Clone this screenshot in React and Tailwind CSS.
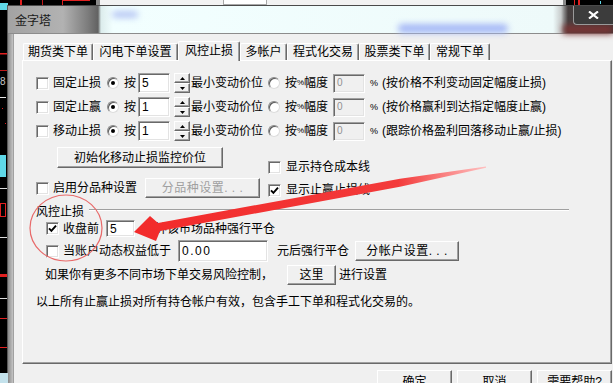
import React from "react";

// classic win32 3d borders
const raised =
	"border border-t-white border-l-white border-r-[#696969] border-b-[#696969] shadow-[inset_-1px_-1px_0_#a0a0a0]";
const sunken =
	"border border-t-[#a0a0a0] border-l-[#a0a0a0] border-r-white border-b-white shadow-[inset_1px_1px_0_#696969,inset_-1px_-1px_0_#e3e3e3]";

const TABS = [
	{ name: "期货类下单", w: "w-[70px]" },
	{ name: "闪电下单设置", w: "w-[85px]" },
	{ name: "风控止损", w: "w-[62px]", active: true },
	{ name: "多帐户", w: "w-[47px]" },
	{ name: "程式化交易", w: "w-[72px]" },
	{ name: "股票类下单", w: "w-[71px]" },
	{ name: "常规下单", w: "w-[60px]" }
];

const STOP_ROWS = [
	{ label: "固定止损", val: "5", note: "(按价格不利变动固定幅度止损)" },
	{ label: "固定止赢", val: "1", note: "(按价格赢利到达指定幅度止赢)" },
	{ label: "移动止损", val: "1", note: "(跟踪价格盈利回落移动止赢/止损)" }
];

function Check({ checked }) {
	return (
		<span className={`w-[13px] h-[13px] shrink-0 bg-white flex items-center justify-center ${sunken}`}>
			{checked && (
				<svg width="9" height="9" viewBox="0 0 9 9">
					<path d="M1 4.3 L3.4 6.8 L8 1.6" stroke="#000" strokeWidth="1.9" fill="none" />
				</svg>
			)}
		</span>
	);
}

function Radio({ on }) {
	return (
		<span className="w-[12px] h-[12px] shrink-0 rounded-full bg-white border border-t-[#8a8a8a] border-l-[#8a8a8a] border-r-[#dcdcdc] border-b-[#dcdcdc] shadow-[inset_1px_1px_0_#5a5a5a] flex items-center justify-center">
			{on && <span className="w-[4px] h-[4px] rounded-full bg-black" />}
		</span>
	);
}

function Field({ className, children, disabled }) {
	return (
		<span
			className={`shrink-0 flex items-center pl-[3px] ${disabled ? "bg-[#f0f0f0] text-[#909090] text-[10px]" : "bg-white"} ${sunken} ${className}`}>
			{children}
		</span>
	);
}

function Btn({ className, children, disabled }) {
	return (
		<span
			className={`shrink-0 flex items-center justify-center bg-[#f0f0f0] ${disabled ? "text-[#a0a0a0]" : ""} ${raised} ${className}`}>
			{children}
		</span>
	);
}

function Spin() {
	return (
		<span className="w-[16px] h-[20px] shrink-0 flex flex-col">
			<span className={`h-[10px] flex items-center justify-center bg-[#f0f0f0] ${raised}`}>
				<svg width="5" height="3" viewBox="0 0 5 3">
					<path d="M0 3 L2.5 0 L5 3 Z" fill="#000" />
				</svg>
			</span>
			<span className={`h-[10px] flex items-center justify-center bg-[#f0f0f0] ${raised}`}>
				<svg width="5" height="3" viewBox="0 0 5 3">
					<path d="M0 0 L2.5 3 L5 0 Z" fill="#000" />
				</svg>
			</span>
		</span>
	);
}

function TopStrip() {
	return (
		<div className="h-[5px] flex shrink-0">
			<div className="w-[96px] bg-black relative">
				<svg width="96" height="5" className="block">
					<rect x="0" y="3" width="8" height="2" fill="#5fd8e8" />
					<rect x="20" y="0" width="2" height="5" fill="#e02020" />
					<rect x="42" y="0" width="1" height="5" fill="#c01818" />
					<rect x="62" y="0" width="28" height="1" fill="#e02020" />
					<rect x="62" y="0" width="1" height="5" fill="#e02020" />
				</svg>
			</div>
			<div className="w-[4px] bg-[#8a8a8a]" />
			<div className="w-[123px] bg-[#f2f2f2]" />
			<div className="w-[44px] bg-white border-x border-b border-[#a8a8a8]" />
			<div className="w-[296px] bg-[#f2f2f2]" />
			<div className="w-[3px] bg-[#8a8a8a]" />
			<div className="flex-1 bg-black">
				<svg width="47" height="5" className="block">
					<rect x="8" y="0" width="1" height="5" fill="#e02020" />
					<rect x="12" y="0" width="2" height="5" fill="#e02020" />
					<rect x="34" y="1" width="1" height="3" fill="#5fd8e8" />
				</svg>
			</div>
		</div>
	);
}

function ChartStrip() {
	return (
		<svg width="8" height="378" className="block shrink-0 bg-black">
			<rect x="0" y="0" width="8" height="5" fill="#5fd8e8" />
			<rect x="0" y="48" width="7" height="1.5" fill="#e02020" />
			<rect x="0" y="65" width="7" height="1" fill="#c01818" />
			<text x="0" y="80" fontSize="10" fill="#c8c8c8" fontFamily="Liberation Sans">8</text>
			<rect x="0" y="92" width="6" height="1" fill="#e8e8e8" />
			<rect x="2" y="103" width="1" height="1" fill="#e02020" />
			<rect x="5" y="118" width="1" height="1" fill="#e02020" />
			<rect x="0" y="150" width="6" height="22" fill="#5fd8e8" />
			<rect x="0" y="183" width="7" height="1" fill="#dcdcdc" />
			<rect x="0.5" y="198.5" width="5" height="13" fill="none" stroke="#e02020" />
			<rect x="0" y="232" width="7" height="1" fill="#dcdcdc" />
			<rect x="0" y="269" width="7" height="3" fill="#e02020" />
			<rect x="0" y="293" width="7" height="1" fill="#dcdcdc" />
			<rect x="0" y="313" width="7" height="1" fill="#e02020" />
			<rect x="0" y="342" width="7" height="1" fill="#e02020" />
			<rect x="0" y="368" width="8" height="10" fill="#c4e2ec" />
			<rect x="7" y="0" width="1" height="368" fill="#5a5a5a" />
		</svg>
	);
}

function TitleBar() {
	return (
		<div className="h-[29px] shrink-0 relative flex items-start justify-between border-t border-[#4a4a4a] border-b border-b-[#8c8c8c] bg-[linear-gradient(90deg,#a3a3a3_0px,#b2b2b2_55px,#7c7c7c_80px,#626262_90px,#dcecec_93px,#f2ffff_105px,#eefafa_545px,#c8cccc_553px,#8a8a8a_556px,#463f3f_560px,#3e3636_605px)]">
			<span className="absolute left-[104px] top-[5px] w-[26px] h-[7px] rounded-full bg-[#b8c8f4] blur-[3px]" />
			<span className="absolute left-[390px] top-[18px] w-[110px] h-[9px] rounded-full bg-[#a6b8f6] blur-[3px]" />
			<span className="absolute left-[555px] top-[19px] w-[50px] h-[9px] bg-[#7a3434] blur-[3px]" />
			<span className="relative pl-[7px] pt-[8px] text-[12px] text-[#1a1a1a]">金字塔</span>
			<span className="relative w-[40px] h-[19px] flex items-center justify-center bg-[#3c3c3c] border-l border-b border-[#9a9a9a] rounded-bl-[4px]">
				<svg width="11" height="8" viewBox="0 0 11 8">
					<path d="M1 0.5 L10 7.5 M10 0.5 L1 7.5" stroke="#fff" strokeWidth="2.2" />
				</svg>
			</span>
		</div>
	);
}

function Tabs() {
	return (
		<div className="h-[19px] flex items-end pl-[1px] shrink-0">
			{TABS.map(t => (
				<span
					key={t.name}
					className={`${t.w} flex items-center justify-center rounded-t-[2px] border-t border-l border-r border-t-white border-l-white border-r-[#696969] shadow-[inset_-1px_0_0_#a0a0a0] bg-[#f0f0f0] ${t.active ? "h-[20px] -mb-px relative z-10 pb-[2px]" : "h-[17px]"}`}>
					{t.name}
				</span>
			))}
		</div>
	);
}

function StopRow({ row }) {
	return (
		<div className="flex items-center h-[20px] pl-[13px]">
			<Check />
			<span className="ml-[4px]">{row.label}</span>
			<span className="ml-[6px]">
				<Radio on />
			</span>
			<span className="ml-[5px]">按</span>
			<Field className="ml-[2px] w-[32px] h-[20px]">{row.val}</Field>
			<span className="ml-[4px]">
				<Spin />
			</span>
			<span className="ml-[1px]">最小变动价位</span>
			<span className="ml-[5px]">
				<Radio />
			</span>
			<span className="ml-[5px] flex items-center">
				按<span className="text-[8px] w-[7px]">%</span>幅度
			</span>
			<Field disabled className="ml-[5px] w-[32px] h-[19px]">0</Field>
			<span className="ml-[5px] text-[9px] w-[9px]">%</span>
			<span className="ml-[3px]">{row.note}</span>
		</div>
	);
}

function RiskPanel() {
	return (
		<div className="w-[590px] h-[304px] shrink-0 flex flex-col bg-[#f0f0f0] border border-t-white border-l-white border-r-[#696969] border-b-[#696969] shadow-[inset_-1px_-1px_0_#a0a0a0]">
			<div className="flex flex-col gap-[4px] pt-[12px]">
				{STOP_ROWS.map(r => (
					<StopRow key={r.label} row={r} />
				))}
			</div>

			<div className="flex">
				<div className="w-[245px] flex flex-col">
					<Btn className="mt-[6px] ml-[34px] w-[166px] h-[21px]">初始化移动止损监控价位</Btn>
					<div className="mt-[10px] h-[20px] flex items-center pl-[13px]">
						<Check />
						<span className="ml-[4px]">启用分品种设置</span>
						<Btn disabled className="ml-[8px] w-[115px] h-[20px] tracking-[0.5px]">
							分品种设置. . .
						</Btn>
					</div>
				</div>
				<div className="flex flex-col mt-[19px]">
					<div className="h-[14px] flex items-center">
						<Check />
						<span className="ml-[5px]">显示持仓成本线</span>
					</div>
					<div className="mt-[9px] h-[14px] flex items-center">
						<Check checked />
						<span className="ml-[5px]">显示止赢止损线</span>
					</div>
				</div>
			</div>

			<div className="mt-[7px] h-[14px] flex items-start pl-[13px]">
				<span>风控止损</span>
				<span className="mt-[4px] ml-[5px] w-[480px] h-[2px] border-t border-[#a0a0a0] border-b border-b-white" />
			</div>

			<div className="mt-[1px] h-[17px] flex items-center pl-[23px]">
				<Check checked />
				<span className="ml-[4px]">收盘前</span>
				<Field className="ml-[7px] w-[29px] h-[17px]">5</Field>
				<span className="ml-[8px]">分钟该市场品种强行平仓</span>
			</div>

			<div className="mt-[3px] h-[22px] flex items-center pl-[23px]">
				<Check />
				<span className="ml-[4px]">当账户动态权益低于</span>
				<Field className="ml-[7px] w-[90px] h-[22px] tracking-[1.5px]">0.00</Field>
				<span className="ml-[9px]">元后强行平仓</span>
				<Btn className="ml-[6px] w-[104px] h-[20px] tracking-[0.5px]">分帐户设置. . .</Btn>
			</div>

			<div className="mt-[3px] h-[20px] flex items-center pl-[22px]">
				<span>如果你有更多不同市场下单交易风险控制，</span>
				<Btn className="ml-[14px] w-[49px] h-[20px]">这里</Btn>
				<span className="ml-[3px]">进行设置</span>
			</div>

			<div className="mt-[10px] h-[14px] flex items-center pl-[13px]">
				以上所有止赢止损对所有持仓帐户有效，包含手工下单和程式化交易的。
			</div>
		</div>
	);
}

function Annotation() {
	return (
		<svg width="613" height="383" className="absolute left-0 top-0 pointer-events-none">
			<defs>
				<linearGradient id="arrowFade" x1="134" y1="0" x2="486" y2="0" gradientUnits="userSpaceOnUse">
					<stop offset="0" stopColor="#f22a2a" />
					<stop offset="0.75" stopColor="#f33a3a" />
					<stop offset="1" stopColor="#ffc0c0" />
				</linearGradient>
			</defs>
			<ellipse cx="66" cy="228" rx="36" ry="33" fill="none" stroke="#e86a6a" strokeWidth="1.2" />
			<polygon
				points="134,232 150,216 158,223 400,178.7 486,166.6 486,167.8 400,186.7 160,231 156,241"
				fill="url(#arrowFade)"
			/>
		</svg>
	);
}

export default function App() {
	return (
		<div className="w-[613px] h-[383px] overflow-hidden relative flex flex-col bg-black text-[12px] leading-[14px] text-black font-['Liberation_Sans','Noto_Sans_CJK_SC',sans-serif]">
			<TopStrip />
			<div className="flex flex-1 min-h-0">
				<ChartStrip />
				<div className="flex-1 flex flex-col min-w-0">
					<TitleBar />
					<div className="flex flex-1 min-h-0">
						<div className="w-[5px] shrink-0 bg-[linear-gradient(90deg,#8a8a8a,#c4c4c4)]" />
						<div className="flex-1 flex flex-col bg-[#f0f0f0] border-l border-[#a0a0a0] pl-[8px] pt-[7px]">
							<Tabs />
							<RiskPanel />
							<div className="mt-[6px] flex justify-end gap-[5px] pr-[1px]">
								<Btn className="w-[75px] h-[23px]">确定</Btn>
								<Btn className="w-[75px] h-[23px]">取消</Btn>
								<Btn className="w-[75px] h-[23px]">需要帮助?</Btn>
							</div>
						</div>
					</div>
				</div>
			</div>
			<Annotation />
		</div>
	);
}
